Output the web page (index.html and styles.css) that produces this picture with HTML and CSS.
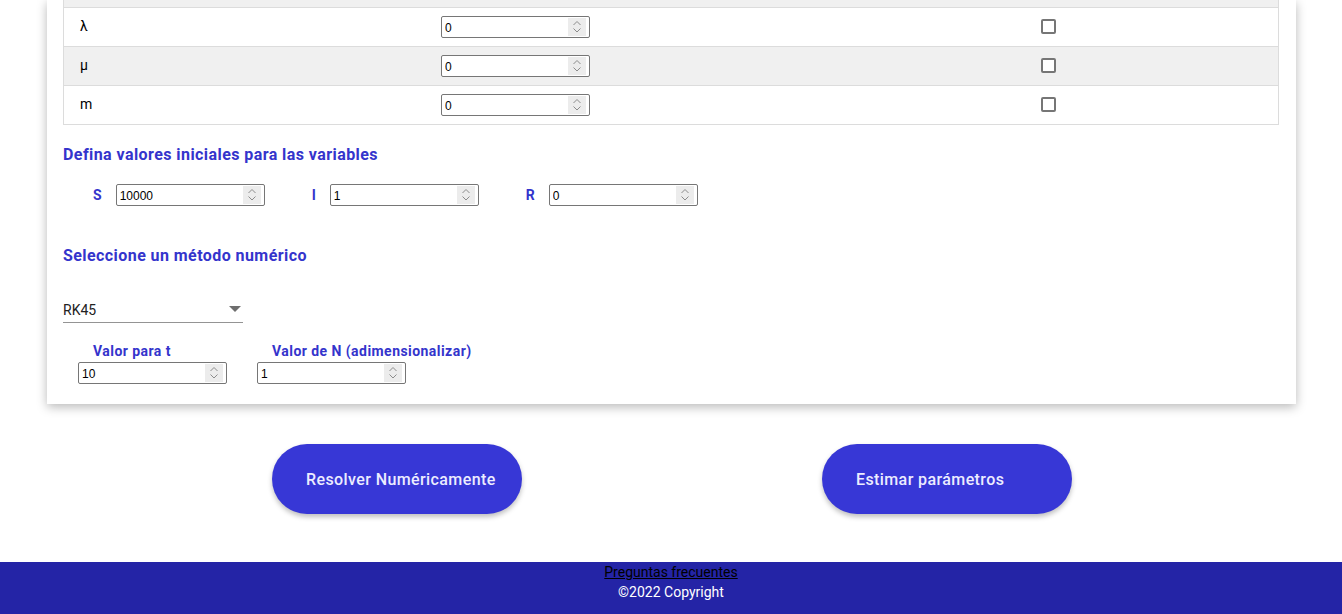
FILE: index.html
```html
<!DOCTYPE html>
<html lang="es">
<head>
<meta charset="utf-8">
<title>Modelo SIR</title>
<link rel="stylesheet" href="styles.css">
</head>
<body>
<main class="card">
  <div class="params">
    <div class="params-head"></div>
    <div class="param-row">
      <div class="cell name">λ</div>
      <div class="cell">
        <div class="num"><input type="text" value="0"><span class="spin"><svg width="18" height="18" viewBox="0 0 18 18"><path d="M5.5 7 L9 3.5 L12.5 7 M5.5 10.5 L9 14 L12.5 10.5" fill="none" stroke="#8c8c8c" stroke-width="1"/></svg></span></div>
      </div>
      <div class="cell center"><input type="checkbox" class="check"></div>
    </div>
    <div class="param-row alt">
      <div class="cell name">μ</div>
      <div class="cell">
        <div class="num"><input type="text" value="0"><span class="spin"><svg width="18" height="18" viewBox="0 0 18 18"><path d="M5.5 7 L9 3.5 L12.5 7 M5.5 10.5 L9 14 L12.5 10.5" fill="none" stroke="#8c8c8c" stroke-width="1"/></svg></span></div>
      </div>
      <div class="cell center"><input type="checkbox" class="check"></div>
    </div>
    <div class="param-row">
      <div class="cell name">m</div>
      <div class="cell">
        <div class="num"><input type="text" value="0"><span class="spin"><svg width="18" height="18" viewBox="0 0 18 18"><path d="M5.5 7 L9 3.5 L12.5 7 M5.5 10.5 L9 14 L12.5 10.5" fill="none" stroke="#8c8c8c" stroke-width="1"/></svg></span></div>
      </div>
      <div class="cell center"><input type="checkbox" class="check"></div>
    </div>
  </div>

  <h2 class="section-title">Defina valores iniciales para las variables</h2>
  <div class="initial-row">
    <div class="var">
      <span class="var-name">S</span>
      <div class="num"><input type="text" value="10000"><span class="spin"><svg width="18" height="18" viewBox="0 0 18 18"><path d="M5.5 7 L9 3.5 L12.5 7 M5.5 10.5 L9 14 L12.5 10.5" fill="none" stroke="#8c8c8c" stroke-width="1"/></svg></span></div>
    </div>
    <div class="var">
      <span class="var-name">I</span>
      <div class="num"><input type="text" value="1"><span class="spin"><svg width="18" height="18" viewBox="0 0 18 18"><path d="M5.5 7 L9 3.5 L12.5 7 M5.5 10.5 L9 14 L12.5 10.5" fill="none" stroke="#8c8c8c" stroke-width="1"/></svg></span></div>
    </div>
    <div class="var">
      <span class="var-name">R</span>
      <div class="num"><input type="text" value="0"><span class="spin"><svg width="18" height="18" viewBox="0 0 18 18"><path d="M5.5 7 L9 3.5 L12.5 7 M5.5 10.5 L9 14 L12.5 10.5" fill="none" stroke="#8c8c8c" stroke-width="1"/></svg></span></div>
    </div>
  </div>

  <h2 class="section-title method-title">Seleccione un método numérico</h2>
  <div class="select">
    <span class="select-value">RK45</span>
    <svg class="select-arrow" width="12" height="6" viewBox="0 0 12 6"><path d="M0 0 L12 0 L6 6 Z" fill="#6e6e6e"/></svg>
  </div>

  <div class="extra-row">
    <div class="field">
      <div class="field-label">Valor para t</div>
      <div class="num"><input type="text" value="10"><span class="spin"><svg width="18" height="18" viewBox="0 0 18 18"><path d="M5.5 7 L9 3.5 L12.5 7 M5.5 10.5 L9 14 L12.5 10.5" fill="none" stroke="#8c8c8c" stroke-width="1"/></svg></span></div>
    </div>
    <div class="field">
      <div class="field-label">Valor de N (adimensionalizar)</div>
      <div class="num"><input type="text" value="1"><span class="spin"><svg width="18" height="18" viewBox="0 0 18 18"><path d="M5.5 7 L9 3.5 L12.5 7 M5.5 10.5 L9 14 L12.5 10.5" fill="none" stroke="#8c8c8c" stroke-width="1"/></svg></span></div>
    </div>
  </div>
</main>

<div class="actions">
  <button class="pill">Resolver Numéricamente</button>
  <button class="pill">Estimar parámetros</button>
</div>

<footer class="footer">
  <a href="#" class="footer-link">Preguntas frecuentes</a>
  <div class="copyright">©2022 Copyright</div>
</footer>
</body>
</html>
```

FILE: styles.css
```css
* { box-sizing: border-box; }

html, body {
  margin: 0;
  padding: 0;
  background: #ffffff;
  font-family: Roboto, "Noto Sans", Arial, sans-serif;
  color: #000;
}

.card {
  margin: 0 46px 0 47px;
  padding: 0 17px 20px 16px;
  background: #fff;
  box-shadow: 0 3px 10px rgba(0, 0, 0, 0.28);
}

/* parameters table */
.params {
  border-left: 1px solid #dcdcdc;
  border-right: 1px solid #dcdcdc;
}

.params-head {
  height: 8px;
  background: #f0f0f0;
  border-bottom: 1px solid #dcdcdc;
}

.param-row {
  display: grid;
  grid-template-columns: 361px 392px 1fr;
  height: 39px;
  border-bottom: 1px solid #dcdcdc;
  background: #fff;
}

.param-row.alt { background: #f0f0f0; }

.cell {
  display: flex;
  align-items: center;
  padding: 0 16px;
  font-size: 14px;
}

.cell.name { padding-bottom: 3px; }

.cell.center { justify-content: center; padding: 0 0 1px 1px; }

.check {
  appearance: none;
  -webkit-appearance: none;
  margin: 0;
  width: 15px;
  height: 15px;
  border: 2px solid #767676;
  border-radius: 2px;
  background: #fff;
}

/* number box */
.num {
  display: flex;
  align-items: center;
  width: 149px;
  height: 22px;
  border: 1px solid #767676;
  border-radius: 2px;
  background: #fff;
}

.num input {
  flex: 1;
  min-width: 0;
  border: 0;
  outline: none;
  padding: 2px 0 0 3px;
  margin: 0;
  height: 20px;
  background: transparent;
  font-family: "Liberation Sans", Arial, sans-serif;
  font-size: 12px;
  color: #000;
}

.spin {
  display: block;
  width: 18px;
  height: 18px;
  margin-right: 3px;
  background: #ececec;
}

.spin svg { display: block; }

/* headings */
.section-title {
  margin: 20px 0 0;
  font-size: 16px;
  line-height: 19px;
  font-weight: 700;
  letter-spacing: 0.43px;
  color: #3434cc;
}

.method-title { margin-top: 40px; }

/* initial values */
.initial-row {
  display: flex;
  gap: 47px;
  margin-top: 20px;
  padding-left: 30px;
}

.var {
  display: flex;
  align-items: center;
  gap: 14px;
}

.var-name {
  font-size: 14px;
  font-weight: 700;
  color: #3434cc;
}

/* select */
.select {
  display: flex;
  align-items: center;
  justify-content: space-between;
  width: 180px;
  margin-top: 29px;
  padding: 6px 2px 2px 0;
  border-bottom: 1px solid #949494;
}

.select-value {
  font-size: 14px;
  line-height: 20px;
  color: #222;
}

.select-arrow { display: block; margin-top: -2px; }

/* t and N */
.extra-row {
  display: flex;
  gap: 30px;
  margin-top: 18px;
  padding-left: 15px;
}

.field-label {
  padding-left: 15px;
  font-size: 14px;
  line-height: 20px;
  font-weight: 700;
  letter-spacing: 0.45px;
  color: #3434cc;
  margin-bottom: 1px;
}

/* buttons */
.actions {
  display: flex;
  justify-content: center;
  gap: 300px;
  margin-top: 40px;
  padding-left: 2px;
}

.pill {
  width: 250px;
  height: 70px;
  border: 0;
  border-radius: 35px;
  padding: 0 0 0 34px;
  text-align: left;
  background: #3737d6;
  color: #ececff;
  font-family: Roboto, "Noto Sans", Arial, sans-serif;
  font-size: 16px;
  font-weight: 500;
  letter-spacing: 0.4px;
  box-shadow: 0 3px 5px rgba(0, 0, 0, 0.25);
  cursor: pointer;
}

/* footer */
.footer {
  margin-top: 48px;
  background: #2424a6;
  text-align: center;
  font-size: 14px;
  line-height: 20px;
  padding-bottom: 12px;
}

.footer-link {
  color: #000;
  text-decoration: underline;
}

.copyright { color: #fff; }
```
